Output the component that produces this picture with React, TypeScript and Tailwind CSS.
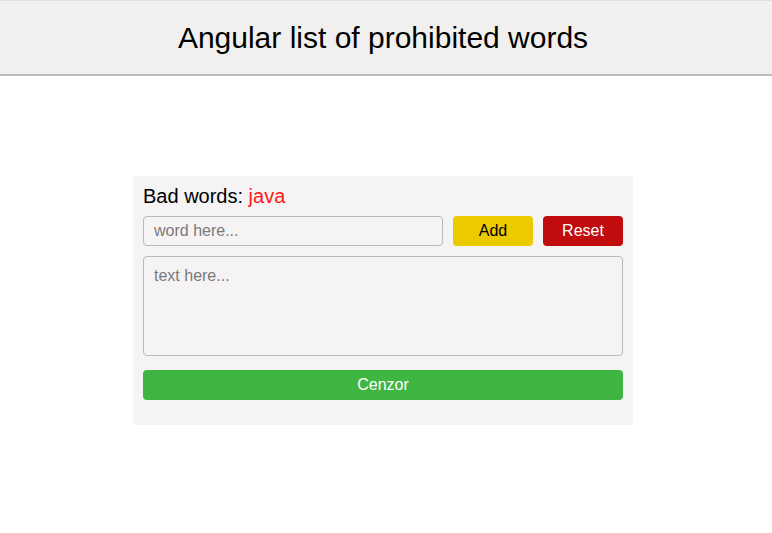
import { useState } from "react"

export default function App() {
  const [badWords, setBadWords] = useState<string[]>(["java"])
  const [word, setWord] = useState("")
  const [text, setText] = useState("")

  const addWord = () => {
    if (word.trim()) setBadWords([...badWords, word.trim()])
    setWord("")
  }

  const cenzor = () => {
    let result = text
    badWords.forEach((w) => {
      result = result.split(w).join("*".repeat(w.length))
    })
    setText(result)
  }

  return (
    <div className="min-h-[533px] bg-white pr-[6px] font-['Liberation_Sans',Arial,sans-serif] text-black">
      <header className="-mr-[6px] flex h-[76px] items-center justify-center border-t border-b-2 border-t-[#dcdfe3] border-b-[#bcbcbc] bg-[#f1f0ef] pr-[6px]">
        <h1 className="text-[30px] leading-none">Angular list of prohibited words</h1>
      </header>

      <div className="mx-auto mt-[100px] w-[500px] rounded bg-[#f5f3f4] px-[10px] pt-[8px] pb-[25px]">
        <p className="text-[20px] leading-[24px]">
          Bad words: <span className="text-[#ff1a1a]">{badWords.join(", ")}</span>
        </p>

        <div className="mt-[8px] flex gap-[10px]">
          <input
            value={word}
            onChange={(e) => setWord(e.target.value)}
            placeholder="word here..."
            className="h-[30px] w-[300px] rounded border border-[#b9b9b9] bg-[#f5f3f4] px-[10px] text-[16px] placeholder:text-[#7a7a7a] outline-none"
          />
          <button
            onClick={addWord}
            className="h-[30px] w-[80px] rounded bg-[#ecca00] text-[16px] text-black"
          >
            Add
          </button>
          <button
            onClick={() => setBadWords([])}
            className="h-[30px] w-[80px] rounded bg-[#c00c0c] text-[16px] text-white"
          >
            Reset
          </button>
        </div>

        <textarea
          value={text}
          onChange={(e) => setText(e.target.value)}
          placeholder="text here..."
          className="mt-[10px] block h-[100px] w-full resize-none rounded border border-[#b9b9b9] bg-[#f5f3f4] px-[10px] py-[7px] text-[16px] placeholder:text-[#7a7a7a] outline-none"
        />

        <button
          onClick={cenzor}
          className="mt-[14px] h-[30px] w-full rounded bg-[#3fb641] text-[16px] text-white"
        >
          Cenzor
        </button>
      </div>
    </div>
  )
}
